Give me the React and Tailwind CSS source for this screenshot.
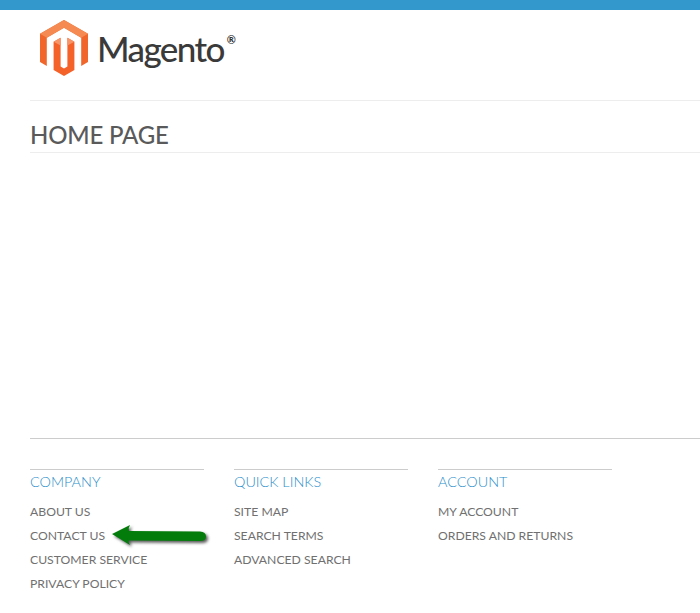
import React from 'react';

const columns = [
  { title: 'COMPANY', links: ['ABOUT US', 'CONTACT US', 'CUSTOMER SERVICE', 'PRIVACY POLICY'] },
  { title: 'QUICK LINKS', links: ['SITE MAP', 'SEARCH TERMS', 'ADVANCED SEARCH'] },
  { title: 'ACCOUNT', links: ['MY ACCOUNT', 'ORDERS AND RETURNS'] },
];

const MagentoMark = () => (
  <svg width="48" height="57" viewBox="0 0 48 57" className="shrink-0">
    <path d="M24 0 L48 13.8 V42 L41.2 46 V17.8 L24 7.8 L6.8 17.8 V46 L0 42 V13.8 Z" fill="#f1672b" />
    <path d="M24 0 L48 13.8 L41.2 17.8 L24 7.8 L6.8 17.8 L0 13.8 Z" fill="#f58a52" />
    <path d="M13.6 21.8 L20.6 17.8 V46.5 L24 48.5 L27.4 46.5 V17.8 L34.4 21.8 V50 L24 56 L13.6 50 Z" fill="#f4622a" />
    <path d="M13.6 21.8 L20.6 17.8 V25.6 Z M34.4 21.8 L27.4 17.8 V25.6 Z" fill="#f79468" />
  </svg>
);

const GreenArrow = () => (
  <svg
    width="104"
    height="32"
    viewBox="0 0 104 32"
    className="absolute left-[79px] top-[-3px] drop-shadow-[2px_2px_1.5px_rgba(0,0,0,0.65)]"
  >
    <path d="M3 13 L21 4 Q19 7 20 10 L91 10.5 Q97 11 97 15.5 Q97 20 91 20 L20 19.5 Q19 21 21 24 Z" fill="#047c0c" />
  </svg>
);

export default function App() {
  return (
    <div className="h-[613px] overflow-hidden bg-white">
      <div className="h-[10px] bg-[#3399cc]" />
      <div className="pl-[30px]">
        <div className="flex h-[91px] items-start border-b border-[#ededed] pl-[10px] pt-[10px]">
          <MagentoMark />
          <div className="relative ml-[9px] mt-[8px] font-['Lato',sans-serif] text-[35px] font-medium leading-[40px] tracking-[-1.6px] text-[#3a3a3a]">
            Magento<span className="absolute right-[-12px] top-[6px] text-[11px] font-bold leading-none tracking-normal text-[#333333]">®</span>
          </div>
        </div>
        <h1 className="flex h-[52px] items-end border-b border-[#ededed] pb-[2px] font-['Lato',sans-serif] text-[24px] font-medium leading-[30px] tracking-[-0.2px] text-[#5a5a5a]">
          HOME PAGE
        </h1>
      </div>
      <div className="ml-[30px] mt-[285px] border-t border-[#cccccc] pt-[30px]">
        <div className="flex gap-[30px]">
          {columns.map((col) => (
            <div key={col.title} className="w-[174px] border-t border-[#cccccc] pt-[1px]">
              <h3 className="font-['Lato',sans-serif] text-[14.4px] font-light leading-[22px] text-[#2d8fcb]">{col.title}</h3>
              <ul className="mt-[7px] font-['Lato',sans-serif] text-[12.2px] leading-[24px] text-[#707070]">
                {col.links.map((link) => (
                  <li key={link} className="relative h-[24px] whitespace-nowrap">
                    {link}
                    {link === 'CONTACT US' && <GreenArrow />}
                  </li>
                ))}
              </ul>
            </div>
          ))}
        </div>
      </div>
    </div>
  );
}
